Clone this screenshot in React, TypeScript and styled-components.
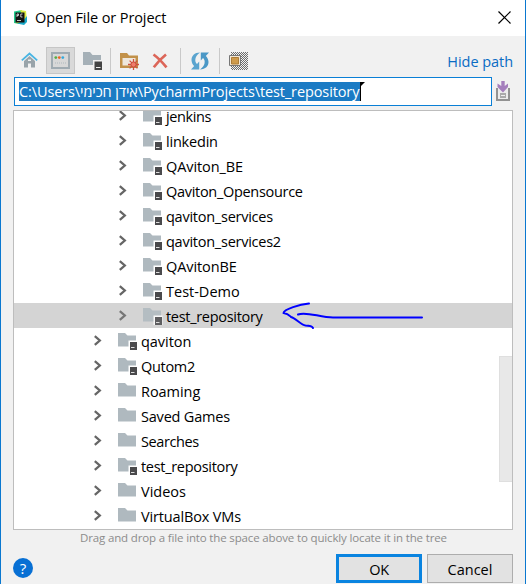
import React from "react";
import styled, { createGlobalStyle } from "styled-components";

const Global = createGlobalStyle`
  * { box-sizing: border-box; }
  body { margin: 0; overflow: hidden; }
  svg { display: block; flex: none; }
`;

const Dialog = styled.div`
  width: 526px;
  height: 584px;
  display: flex;
  flex-direction: column;
  background: #f1f1f1;
  border-left: 1px solid #0a78d0;
  border-right: 1px solid #0a78d0;
  font-family: "Open Sans", "Noto Sans", "Liberation Sans", sans-serif;
  font-size: 14.5px;
  color: #000;
  overflow: hidden;
  white-space: nowrap;
`;

const TitleBar = styled.header`
  height: 36px;
  flex: none;
  display: flex;
  align-items: center;
  padding: 0 14px 2px 12px;
  background: #fff;
`;

const Label = styled.span<{ $track?: number; $size?: number }>`
  font-size: ${(p) => p.$size ?? 14.5}px;
  letter-spacing: ${(p) => p.$track ?? -0.3}px;
`;

const Title = styled(Label)`
  margin-left: 7px;
  flex: 1;
`;

const Toolbar = styled.div`
  height: 41px;
  flex: none;
  display: flex;
  align-items: flex-start;
  padding: 11px 12px 0 14px;
`;

const Tool = styled.div<{ $active?: boolean; $width: number }>`
  width: ${(p) => p.$width}px;
  height: 27px;
  flex: none;
  display: flex;
  align-items: center;
  justify-content: center;
  background: ${(p) => (p.$active ? "#d9d9d9" : "transparent")};
  border: 1px solid ${(p) => (p.$active ? "#c6c6c6" : "transparent")};
`;

const Separator = styled.div`
  width: 1px;
  height: 26px;
  margin-top: 1px;
  background: #c9c9c9;
`;

const HideLink = styled.a`
  margin-left: auto;
  margin-top: 4px;
  line-height: 22px;
  color: #0a6cc4;
`;

const PathRow = styled.div`
  height: 29px;
  flex: none;
  display: flex;
  gap: 4px;
  padding-left: 13px;
`;

const PathField = styled.div`
  width: 478px;
  height: 29px;
  padding: 4px;
  display: flex;
  background: #fff;
  border: 1px solid #0a7fd6;
`;

const Selected = styled.div`
  width: 342px;
  height: 19px;
  line-height: 19px;
  color: #fff;
  background: #1b7bc4;
  border-right: 1px solid #000;
`;

const HistoryButton = styled.div`
  padding-top: 4px;
`;

const Tree = styled.div`
  position: relative;
  width: 500px;
  height: 420px;
  margin: 4px 0 0 12px;
  flex: none;
  background: #fff;
  border: 1px solid #bdbdbd;
  overflow: hidden;
`;

const Rows = styled.div`
  margin-top: -8px;
`;

const Row = styled.div<{ $depth: number; $selected?: boolean }>`
  height: 25px;
  display: flex;
  align-items: center;
  padding-left: ${(p) => 76 + p.$depth * 25}px;
  background: ${(p) => (p.$selected ? "#d4d4d4" : "transparent")};
  svg { opacity: ${(p) => (p.$selected ? 0.85 : 1)}; }
`;

const RowLabel = styled(Label)`
  margin-left: 3px;
  padding-top: 3px;
  line-height: 16px;
`;

const Thumb = styled.div`
  position: absolute;
  right: 0;
  top: 245px;
  width: 13px;
  height: 126px;
  background: #e8e8e8;
  border: 1px solid #dfdfdf;
  border-right: 0;
`;

const Arrow = styled.svg`
  position: absolute;
  left: 266px;
  top: 189px;
`;

const Hint = styled.div`
  height: 16px;
  flex: none;
  line-height: 13px;
  padding-left: 79px;
  color: #8c8c8c;
`;

const Footer = styled.footer`
  flex: 1;
  display: flex;
  align-items: flex-start;
  padding: 8px 12px 0;
`;

const Help = styled.div`
  width: 20px;
  height: 20px;
  margin-top: 4px;
  margin-right: auto;
  border-radius: 50%;
  display: flex;
  align-items: center;
  justify-content: center;
  background: #0870d4;
  color: #fff;
`;

const Button = styled.button<{ $primary?: boolean }>`
  width: 86px;
  height: 29px;
  margin-left: 5px;
  padding: 1px 0 0;
  font-family: inherit;
  color: #000;
  background: #e2e2e2;
  border: ${(p) => (p.$primary ? "3px solid #0a84e0" : "1px solid #adadad")};
`;

const Chevron = () => (
  <svg width="28" height="25" viewBox="0 0 28 25">
    <path d="M4.800 8.200 9.800 12.500 4.800 16.800" fill="none" stroke="#666" strokeWidth="2.300" />
  </svg>
);

const Folder = ({ module }: { module?: boolean }) => (
  <svg width="20" height="25" viewBox="0 0 20 25">
    <path d="M0 5h7l2.5 2.500H18V18.500H0z" fill="#afb9bf" />
    {module && (
      <>
        <path d="M10.500 12.500h9V22h-9z" fill="#fff" />
        <path d="M12 14h7v8h-7z" fill="#4a4a4c" />
        <path d="M13 19.500h3.500" stroke="#ddd" />
      </>
    )}
  </svg>
);

const AppIcon = () => (
  <svg width="15" height="15" viewBox="0 0 15 15">
    <path d="M1 1.500 9 0 7 7l-1 7-5-1z" fill="#21c98b" />
    <path d="M7 0l6 1 1 10-5 3-7-1 9-3z" fill="#dcea42" />
    <path d="M10 11l4-5v6l-3 3-7-1.500z" fill="#19a9c9" />
    <path d="M2.500 2.500h9v10h-9z" fill="#111" />
    <path d="M4 7V4h1.500v1.500H4M9.500 4H7.800v3h1.700M4 10.500h4" fill="none" stroke="#eee" strokeWidth=".8" />
  </svg>
);

const Home = () => (
  <svg width="17" height="17" viewBox="0 0 17 17">
    <path d="M3 9l5.500-5L14 9v6.500h-4v-4H7v4H3z" fill="#99a4aa" />
    <path d="M.8 8.300 8.500 1.500l7.700 6.800" fill="none" stroke="#49b5e3" strokeWidth="1.800" />
    <path d="M7 7.500h3v1.500H7z" fill="#f1f1f1" />
  </svg>
);

const Desktop = () => (
  <svg width="19" height="17" viewBox="0 0 19 17">
    <path d="M1 1h17v15H1z" fill="#d8d8d8" stroke="#a0abb2" strokeWidth="2" />
    <circle cx="4.800" cy="5.600" r="1.400" fill="#57ad45" />
    <circle cx="8.300" cy="5.600" r="1.400" fill="#f26522" />
    <circle cx="11.800" cy="5.600" r="1.400" fill="#35a9dc" />
    <path d="M4 11h11" stroke="#aeb8bd" strokeDasharray="1 1" />
  </svg>
);

const ProjectDir = () => (
  <svg width="20" height="19" viewBox="0 0 20 19">
    <path d="M0 1h7l2.500 3H18v10H0z" fill="#a5b0b7" />
    <path d="M10 9h10v10H10z" fill="#f1f1f1" />
    <path d="M11.500 10.500H19V19h-7.500z" fill="#444" />
    <path d="M13 16.500h4.500" stroke="#eee" />
  </svg>
);

const NewFolder = () => (
  <svg width="20" height="18" viewBox="0 0 20 18">
    <path d="M0 1h7l2 2.500h9V16H0z" fill="#c29149" />
    <path d="M2.500 6h13v7.500h-13z" fill="#eee7dc" />
    <path d="M13.500 7v11M8 12.500h11M9.600 8.600l7.800 7.800M17.400 8.600l-7.800 7.800" stroke="#d0503f" strokeWidth="1.300" />
    <circle cx="13.500" cy="12.500" r="2.600" fill="#ef7d6b" stroke="#c94a38" />
  </svg>
);

const Delete = () => (
  <svg width="16" height="16" viewBox="0 0 16 16">
    <path d="M1.500 1.500C5 4 10.500 9.500 14.500 14.300M14 1.500C9.500 5 5 10 1.800 14.300" fill="none" stroke="#dc6659" strokeWidth="2.700" />
  </svg>
);

const Refresh = () => (
  <svg width="18" height="18" viewBox="0 0 18 18">
    <path d="M9 .5C3.500.5.3 4 .5 8.200.7 10.800 1.800 12.700 3.200 14L0 17.500h8.200V9.500L6 12C3.200 9.500 3.700 4 9 .5z" fill="#5aa4cf" />
    <path d="M9 17.500c5.500 0 8.700-3.500 8.500-7.700-.2-2.600-1.300-4.500-2.700-5.800L18 .5H9.800v8L12 6c2.800 2.500 2.300 8-3 11.500z" fill="#4b98c6" />
  </svg>
);

const Hidden = () => (
  <svg width="19" height="18" viewBox="0 0 19 18">
    <defs>
      <pattern id="dither" width="2" height="2" patternUnits="userSpaceOnUse">
        <path d="M0 0h1v1H0zM1 1h1v1H1z" fill="#6c6c6c" />
      </pattern>
    </defs>
    <path d="M2 0h17v18H2z" fill="url(#dither)" />
    <path d="M.5 3.500h11v10H.5z" fill="#f2e7d4" stroke="#777" />
    <path d="M2.500 5.500h7v6.500h-7z" fill="#cf9b4c" stroke="#ad7c37" />
  </svg>
);

const History = () => (
  <svg width="14" height="20" viewBox="0 0 14 20">
    <path d="M1 7v12h12V7" fill="#ececec" stroke="#929292" strokeWidth="2" />
    <path d="M4 12h6v5H4z" fill="#aaa" />
    <path d="M5 14.500h4" stroke="#eee" />
    <path d="M5.300 0h3.400v5L12 2.500V6L7 11.500 1.500 6V2.500l3.800 2.500z" fill="#a57fbd" />
  </svg>
);

const rows = [
  { name: "jenkins", depth: 1, module: true, track: -0.4 },
  { name: "linkedin", depth: 1, module: true, track: -0.2 },
  { name: "QAviton_BE", depth: 1, module: true, track: -0.1 },
  { name: "Qaviton_Opensource", depth: 1, module: true, track: -0.3 },
  { name: "qaviton_services", depth: 1, module: true, track: -0.25 },
  { name: "qaviton_services2", depth: 1, module: true, track: -0.25 },
  { name: "QAvitonBE", depth: 1, module: true, track: -0.1 },
  { name: "Test-Demo", depth: 1, module: true, track: 0 },
  { name: "test_repository", depth: 1, module: true, selected: true, track: -0.3 },
  { name: "qaviton", depth: 0, module: true, track: -0.05 },
  { name: "Qutom2", depth: 0, module: true, track: -0.3 },
  { name: "Roaming", depth: 0, track: -0.05 },
  { name: "Saved Games", depth: 0, track: -0.2 },
  { name: "Searches", depth: 0, track: -0.4 },
  { name: "test_repository", depth: 0, module: true, track: -0.3 },
  { name: "Videos", depth: 0, track: 0 },
  { name: "VirtualBox VMs", depth: 0, track: -0.15 },
];

export default function App() {
  return (
    <Dialog>
      <Global />
      <TitleBar>
        <AppIcon />
        <Title $track={-0.1}>Open File or Project</Title>
        <svg width="13" height="13" viewBox="0 0 13 13">
          <path d="M.5.5l12 12M12.500.5l-12 12" stroke="#000" strokeWidth="1.200" />
        </svg>
      </TitleBar>
      <Toolbar>
        <Tool $width={28}><Home /></Tool>
        <Tool $width={3} />
        <Tool $width={29} $active><Desktop /></Tool>
        <Tool $width={35}><ProjectDir /></Tool>
        <Separator />
        <Tool $width={37}><NewFolder /></Tool>
        <Tool $width={24}><Delete /></Tool>
        <Tool $width={8} />
        <Separator />
        <Tool $width={38}><Refresh /></Tool>
        <Separator />
        <Tool $width={37}><Hidden /></Tool>
        <HideLink><Label $track={-0.05}>Hide path</Label></HideLink>
      </Toolbar>
      <PathRow>
        <PathField>
          <Selected><Label $track={-0.11}>C:\Users\אידן חכימי\PycharmProjects\test_repository</Label></Selected>
          <svg width="4" height="4" viewBox="0 0 4 4"><path d="M0 0h4L0 4z" /></svg>
        </PathField>
        <HistoryButton><History /></HistoryButton>
      </PathRow>
      <Tree>
        <Rows>
          {rows.map((r, i) => (
            <Row key={i} $depth={r.depth} $selected={r.selected}>
              <Chevron />
              <Folder module={r.module} />
              <RowLabel $track={r.track}>{r.name}</RowLabel>
            </Row>
          ))}
        </Rows>
        <Thumb />
        <Arrow width="150" height="34" viewBox="280 300 150 34">
          <path d="M309 303.500C300 304.500 284 309 283.500 313 288 313.500 289 315 291 317 296 318.500 301 325 305.500 325.500 310 325.500 312 326 313 328M298 314.500C306 311 320 317.500 333 317.500H422" fill="none" stroke="#0000ff" strokeWidth="2" strokeLinecap="round" strokeLinejoin="round" />
        </Arrow>
      </Tree>
      <Hint><Label $size={11.5} $track={-0.15}>Drag and drop a file into the space above to quickly locate it in the tree</Label></Hint>
      <Footer>
        <Help><Label $size={15} $track={0}>?</Label></Help>
        <Button $primary><Label>OK</Label></Button>
        <Button><Label $track={0}>Cancel</Label></Button>
      </Footer>
    </Dialog>
  );
}
